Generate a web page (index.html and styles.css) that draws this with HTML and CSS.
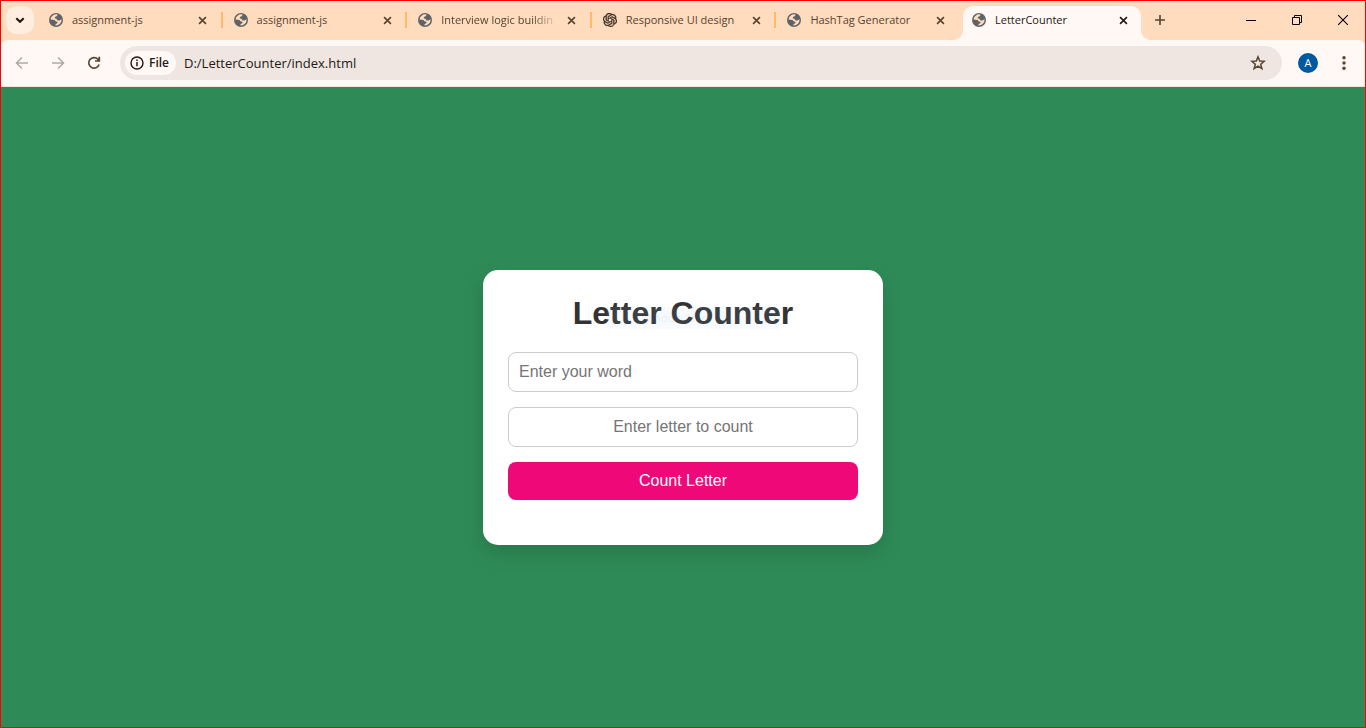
FILE: index.html
```html
<!DOCTYPE html>
<html lang="en">
<head>
<meta charset="utf-8">
<meta name="viewport" content="width=device-width, initial-scale=1">
<title>LetterCounter</title>
<link rel="stylesheet" href="styles.css">
</head>
<body>
<svg class="defs" aria-hidden="true">
  <symbol id="globe" viewBox="0 0 14 14">
    <circle cx="7" cy="7" r="7" fill="#5f6368"/>
    <path class="land" d="M8.600 1.600 7.800 3.200 6.200 3.800 5.600 5.300 7.400 5.800 8.600 7.400 10.400 7.600 12.500 6.300A5.600 5.600 0 0 1 6.400 12.500L6.700 10.900 8.300 10.300 8.600 8.900 6.600 8.300 5.600 6.900 1.500 6.600A5.600 5.600 0 0 1 8.600 1.600Z"/>
  </symbol>
  <symbol id="cross" viewBox="0 0 10 10">
    <path d="M1.200 1.200 8.800 8.800M8.800 1.200 1.200 8.800" fill="none" stroke="currentColor" stroke-width="1.8"/>
  </symbol>
</svg>
<div class="window">
  <header class="tab-strip">
    <button class="tab-search" aria-label="Search tabs"><svg width="10" height="10" viewBox="0 0 10 10"><path d="M1.3 3.2 5 6.8 8.7 3.2" fill="none" stroke="currentColor" stroke-width="2"/></svg></button>
    <nav class="tabs" aria-label="Tabs">
      <div class="tab"><svg class="favicon"><use href="#globe"/></svg><span class="tab-title">assignment-js</span><button class="tab-close" aria-label="Close tab"><svg><use href="#cross"/></svg></button></div>
      <div class="tab"><svg class="favicon"><use href="#globe"/></svg><span class="tab-title">assignment-js</span><button class="tab-close" aria-label="Close tab"><svg><use href="#cross"/></svg></button></div>
      <div class="tab"><svg class="favicon"><use href="#globe"/></svg><span class="tab-title faded">Interview logic buildin</span><button class="tab-close" aria-label="Close tab"><svg><use href="#cross"/></svg></button></div>
      <div class="tab"><svg class="favicon" viewBox="0 0 24 24" fill="#3d2f26" stroke="#3d2f26" stroke-width=".7"><path d="M22.28 9.82a5.98 5.98 0 0 0-.52-4.91 6.05 6.05 0 0 0-6.51-2.9A6.07 6.07 0 0 0 4.98 4.18a5.98 5.98 0 0 0-4 2.9 6.05 6.05 0 0 0 .74 7.1 5.98 5.98 0 0 0 .51 4.91 6.05 6.05 0 0 0 6.51 2.9A5.98 5.98 0 0 0 13.26 24a6.06 6.06 0 0 0 5.77-4.21 5.99 5.99 0 0 0 4-2.9 6.06 6.06 0 0 0-.75-7.07zm-9.02 12.61a4.48 4.48 0 0 1-2.88-1.04l.14-.08 4.78-2.76a.8.8 0 0 0 .39-.68v-6.74l2.02 1.17.04.05v5.58a4.5 4.5 0 0 1-4.49 4.5zM3.6 18.3a4.47 4.47 0 0 1-.54-3.01l.14.08 4.78 2.76a.77.77 0 0 0 .78 0l5.84-3.37v2.33l-.03.06-4.83 2.79A4.5 4.5 0 0 1 3.6 18.3zM2.34 7.9a4.49 4.49 0 0 1 2.37-1.98v5.68a.77.77 0 0 0 .39.68l5.81 3.35-2.02 1.17h-.07l-4.83-2.79A4.5 4.5 0 0 1 2.34 7.87zm16.6 3.85-5.83-3.39 2.01-1.16h.07l4.83 2.79a4.49 4.49 0 0 1-.68 8.1v-5.67a.79.79 0 0 0-.4-.67zm2.01-3.02-.14-.09-4.77-2.78a.78.78 0 0 0-.79 0L9.41 9.23V6.9l.03-.06 4.83-2.79a4.5 4.5 0 0 1 6.68 4.66zM8.31 12.86l-2.02-1.16-.04-.06V6.07a4.5 4.5 0 0 1 7.38-3.45l-.14.08-4.78 2.76a.8.8 0 0 0-.4.68zm1.09-2.36L12 9l2.61 1.5v3L12 15l-2.6-1.5z"/></svg><span class="tab-title">Responsive UI design</span><button class="tab-close" aria-label="Close tab"><svg><use href="#cross"/></svg></button></div>
      <div class="tab"><svg class="favicon"><use href="#globe"/></svg><span class="tab-title">HashTag Generator</span><button class="tab-close" aria-label="Close tab"><svg><use href="#cross"/></svg></button></div>
      <div class="tab active"><svg class="favicon"><use href="#globe"/></svg><span class="tab-title">LetterCounter</span><button class="tab-close" aria-label="Close tab"><svg><use href="#cross"/></svg></button></div>
    </nav>
    <button class="new-tab" aria-label="New tab"><svg width="12" height="12" viewBox="0 0 12 12"><path d="M6 1v10M1 6h10" stroke="currentColor" stroke-width="1.6"/></svg></button>
    <div class="window-controls">
      <button aria-label="Minimize"><svg width="10" height="10" viewBox="0 0 10 10"><path d="M0 5.5h10" stroke="#000"/></svg></button>
      <button aria-label="Restore"><svg width="10" height="10" viewBox="0 0 10 10"><path d="M.5 2.5h7v7h-7zM2.5 2.500v-2h7v7h-2" fill="none" stroke="#000"/></svg></button>
      <button aria-label="Close"><svg width="10" height="10" viewBox="0 0 10 10"><path d="M0 0 10 10M10 0 0 10" stroke="#000" stroke-width="1.1"/></svg></button>
    </div>
  </header>
  <div class="toolbar">
    <div class="nav-buttons">
      <button class="dim" aria-label="Back"><svg width="14" height="14" viewBox="0 0 14 14"><path d="M13 7H2M7 1.500 1.500 7 7 12.500" fill="none" stroke="currentColor" stroke-width="1.6"/></svg></button>
      <button class="dim" aria-label="Forward"><svg width="14" height="14" viewBox="0 0 14 14"><path d="M1 7h11M7 1.500 12.500 7 7 12.500" fill="none" stroke="currentColor" stroke-width="1.6"/></svg></button>
      <button aria-label="Reload"><svg width="14" height="14" viewBox="0 0 14 14"><path d="M12.100 8.500A5.300 5.300 0 1 1 11 3.300L12 4.300M12.300 .8V5H8" fill="none" stroke="currentColor" stroke-width="1.7"/></svg></button>
    </div>
    <div class="address-bar">
      <button class="file-chip"><svg width="14" height="14" viewBox="0 0 14 14"><circle cx="7" cy="7" r="6" fill="none" stroke="currentColor" stroke-width="1.400"/><path d="M7 6v4.200M7 3.600v1.500" stroke="currentColor" stroke-width="1.500"/></svg>File</button>
      <input class="address" type="text" aria-label="Address" value="D:/LetterCounter/index.html">
      <button class="bookmark" aria-label="Bookmark this page"><svg width="16" height="16" viewBox="0 0 16 16"><path d="M8 1.800 9.700 6l4.500.3-3.500 2.900 1.200 4.500L8 11.200l-3.900 2.500 1.200-4.500L1.800 6.300 6.300 6z" fill="none" stroke="currentColor" stroke-width="1.500"/></svg></button>
    </div>
    <button class="profile" aria-label="Profile A">A</button>
    <button class="menu" aria-label="Menu"><svg width="4" height="14" viewBox="0 0 4 14" fill="currentColor"><circle cx="2" cy="1.700" r="1.700"/><circle cx="2" cy="7" r="1.700"/><circle cx="2" cy="12.300" r="1.700"/></svg></button>
  </div>
  <main class="page">
    <form class="card">
      <h1 class="title">Letter Counter<span class="tooltip" aria-hidden="true">Window Snip</span></h1>
      <input class="field" type="text" placeholder="Enter your word" aria-label="Enter your word">
      <input class="field centered" type="text" maxlength="1" placeholder="Enter letter to count" aria-label="Enter letter to count">
      <button class="count" type="button">Count Letter</button>
      <div class="result"></div>
    </form>
  </main>
</div>
</body>
</html>
```

FILE: styles.css
```css
* { box-sizing: border-box; }
body { margin: 0; font-family: "Open Sans", "Noto Sans", sans-serif; }
button { border: 0; padding: 0; background: none; color: inherit; font: inherit; display: flex; align-items: center; justify-content: center; flex: none; }
svg { display: block; flex: none; }
.defs { position: absolute; width: 0; height: 0; }

.window { position: relative; display: flex; flex-direction: column; min-height: 100vh; background: #ffdcbd; color: #564332; }
.window::after { content: ""; position: absolute; inset: 0; border: 1px solid #f00; pointer-events: none; }

.tab-strip { display: flex; height: 40px; padding-left: 6px; }
.tab-search { width: 28px; height: 28px; margin: 6px 4px 0 0; border-radius: 10px; background: #ffede0; color: #1f1410; }
.tabs { display: flex; flex: 0 1 1108px; min-width: 0; }
.tab { display: flex; flex: 1 1 0; align-items: center; min-width: 0; height: 28px; margin-top: 6px; padding: 0 12px 0 11px; position: relative; }
.tab::after { content: ""; position: absolute; right: 0; top: 6px; width: 2px; height: 16px; background: #ffb968; }
.favicon { width: 14px; height: 14px; }
.land { fill: #ffdcbd; }
.tab-title { flex: 1; min-width: 0; margin: 0 6px 0 9px; overflow: hidden; white-space: nowrap; font-size: 11px; line-height: 16px; }
.faded { -webkit-mask-image: linear-gradient(to right, #000 78%, transparent); mask-image: linear-gradient(to right, #000 78%, transparent); }
.tab-close { width: 16px; height: 16px; }
.tab-close svg { width: 9px; height: 9px; }
.tab:nth-child(5)::after { width: 0; }
.tab.active { flex: 0 1 178px; height: 34px; margin: 6px 5px 0 2px; padding: 0 9px 6px 9px; border-radius: 10px 10px 0 0; background: #fff8f5; color: #241914; }
.active .land { fill: #fff8f5; }
.tab.active::before, .tab.active::after { content: ""; display: block; position: absolute; top: auto; bottom: 0; width: 10px; height: 10px; }
.tab.active::before { right: 100%; background: radial-gradient(circle at 0 0, transparent 10px, #fff8f5 10px); }
.tab.active::after { right: auto; left: 100%; background: radial-gradient(circle at 100% 0, transparent 10px, #fff8f5 10px); }
.new-tab { width: 28px; height: 28px; margin-top: 6px; }
.window-controls { display: flex; margin-left: auto; }
.window-controls button { width: 46px; height: 40px; }

.toolbar { display: flex; align-items: center; height: 47px; padding: 0 10px 1px 4px; border-radius: 8px 8px 0 0; border-bottom: 1px solid #f1e2d8; background: #fff8f5; }
.nav-buttons { display: flex; margin-right: 8px; }
.nav-buttons button { width: 36px; height: 34px; }
.nav-buttons .dim { color: #b5a9a3; }
.address-bar { display: flex; flex: 1; align-items: center; min-width: 0; height: 34px; padding: 0 16px 0 5px; border-radius: 17px; background: #efe6e1; color: #241914; }
.file-chip { gap: 5px; height: 24px; padding: 0 7px 0 5px; border-radius: 12px; background: #fff8f5; font-size: 12px; font-weight: 600; }
.address { flex: 1; min-width: 0; padding: 0 8px; border: 0; background: none; color: inherit; font: inherit; font-size: 13px; outline: 0; }
.bookmark { color: #564332; }
.profile { width: 20px; height: 20px; margin-left: 16px; border-radius: 50%; background: #00589f; color: #fff; font-size: 11px; }
.menu { width: 28px; height: 28px; margin: 0 -2px 0 12px; }

.page { display: flex; flex: 1; align-items: center; justify-content: center; padding: 20px; background: #2e8b57; font-family: "Liberation Sans", Arial, sans-serif; }
.card { display: flex; flex-direction: column; gap: 15px; width: 400px; max-width: 100%; padding: 25px; border-radius: 15px; background: #fff; box-shadow: 0 8px 20px rgba(0, 0, 0, .15); }
.title { position: relative; margin: 0 0 5px; color: #333; font-size: 32px; line-height: 37px; text-align: center; }
.tooltip { position: absolute; left: 99px; top: 12px; width: 172px; height: 22px; padding-left: 34px; background: rgba(150, 210, 255, .08); color: rgba(60, 60, 60, .09); font: 11px/22px "Open Sans", sans-serif; text-align: left; }
.field { width: 100%; height: 40px; padding: 0 10px; border: 1px solid #ccc; border-radius: 8px; background: #fff; color: #333; font: 16px "Liberation Sans", Arial, sans-serif; }
.field::placeholder { color: #757575; opacity: 1; }
.centered { text-align: center; }
.count { height: 38px; border-radius: 8px; background: #ef0978; color: #fff; font-size: 16px; }
.result { min-height: 5px; }
```
